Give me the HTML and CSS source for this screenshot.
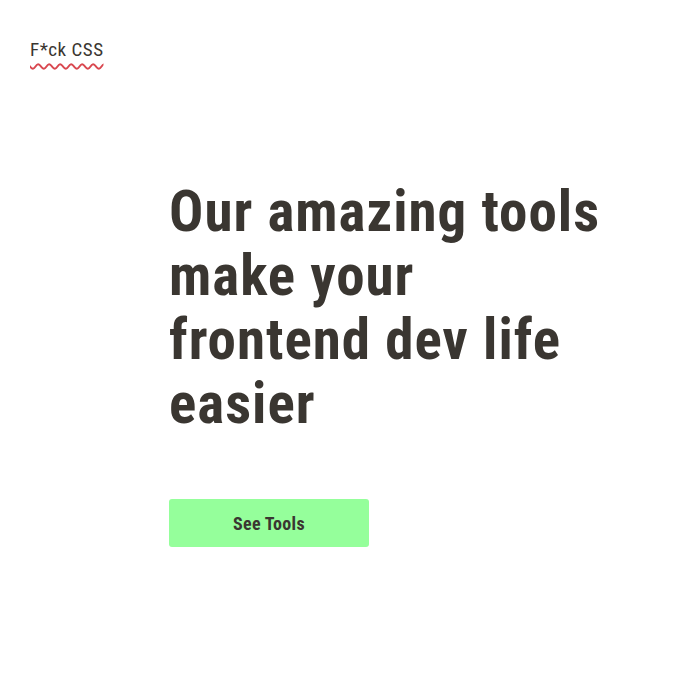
FILE: index.html
```html
<!DOCTYPE html>
<html lang="en">
<head>
<meta charset="utf-8">
<title>F*ck CSS</title>
<link rel="stylesheet" href="styles.css">
</head>
<body>
<header class="site-header">
  <a class="logo" href="#">F*ck CSS</a>
</header>
<main class="hero">
  <h1 class="hero-title">Our amazing tools<br>make your<br>frontend dev life<br>easier</h1>
  <a class="btn" href="#">See Tools</a>
</main>
</body>
</html>
```
FILE: styles.css
```css
html, body { margin: 0; padding: 0; background: #ffffff; }
body { font-family: "Roboto Condensed", "Roboto", "Liberation Sans", sans-serif; color: #3a3631; }
.site-header { padding: 38px 30px 0; height: 40px; }
.logo {
  font-size: 19px;
  line-height: 24px;
  color: #3a3631;
  text-decoration: underline wavy #d9474f;
  text-decoration-thickness: 1.5px;
  text-underline-offset: 7px;
  letter-spacing: 0.5px;
}
.hero { padding: 102px 0 0 169px; display: flex; flex-direction: column; align-items: flex-start; }
.hero-title {
  margin: 0;
  font-size: 57px;
  line-height: 64px;
  font-weight: 700;
  letter-spacing: 1px;
  color: #3a3631;
}
.btn {
  margin-top: 63px;
  width: 200px;
  height: 48px;
  display: flex;
  align-items: center;
  justify-content: center;
  background: #95ff9b;
  border-radius: 3px;
  color: #3a3631;
  font-weight: 700;
  font-size: 18px;
  text-decoration: none;
  letter-spacing: 0.3px;
}
```
